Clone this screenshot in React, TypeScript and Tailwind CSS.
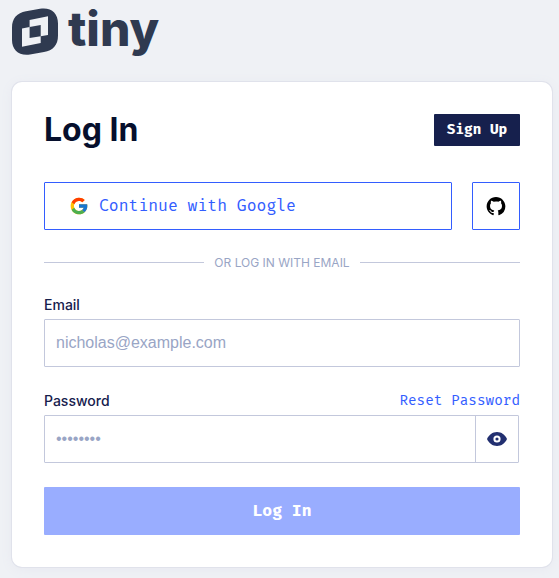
import React from "react";

const mono = "font-['Fira_Code','Fira_Mono','DejaVu_Sans_Mono',monospace]";

function Logo() {
  return (
    <a href="#" aria-label="tiny" className="flex h-12 w-fit items-start gap-2 text-[#2f3a50]">
      <svg width="48" height="48" viewBox="0 0 48 48" aria-hidden="true">
        <path
          d="M14 3.200 L28 .8 C39 -1 46 5 46 15.500 L46 27.500 C46 37 41 42.500 32 44 L18 46.500 C7 48.200 0 42 0 32 L0 19.500 C0 10.500 5 4.800 14 3.200Z"
          fill="currentColor"
        />
        <path fill="#eff1f5" d="M17.600 12 L36 8.200 V26.900 L28.700 28.200 V16.900 L17.600 19Z" />
        <path fill="#eff1f5" d="M10 20.400 L17.600 19 V30 L28.700 28.200 V34.900 L10 38.800Z" />
      </svg>
      <span className="font-['Inter',sans-serif] text-5xl leading-[42px] font-extrabold">tiny</span>
    </a>
  );
}

function GoogleIcon() {
  return (
    <svg width="20" height="20" viewBox="0 0 48 48" aria-hidden="true">
      <path fill="#FFC107" d="M43.6 20H24v8h11.3C33.7 32.7 29.2 36 24 36c-6.600 0-12-5.400-12-12s5.400-12 12-12c3.100 0 5.800 1.200 8 3l5.700-5.700C34 6.100 29.300 4 24 4 13 4 4 13 4 24s9 20 20 20 20-9 20-20c0-1.300-.1-2.700-.4-4z" />
      <path fill="#FF3D00" d="m6.300 14.700 6.600 4.800C14.700 15.100 19 12 24 12c3.100 0 5.800 1.200 8 3l5.700-5.700C34 6.100 29.300 4 24 4 16.300 4 9.700 8.300 6.300 14.700z" />
      <path fill="#4CAF50" d="M24 44c5.200 0 9.900-2 13.400-5.200l-6.200-5.200C29.200 35.100 26.700 36 24 36c-5.200 0-9.600-3.300-11.300-8l-6.500 5C9.500 39.600 16.200 44 24 44z" />
      <path fill="#1976D2" d="M43.600 20H24v8h11.300c-.8 2.200-2.200 4.200-4.100 5.600l6.200 5.200C37 39.200 44 34 44 24c0-1.300-.1-2.700-.4-4z" />
    </svg>
  );
}

function GitHubIcon() {
  return (
    <svg width="20" height="20" viewBox="0 0 16 16" fill="#000" aria-hidden="true">
      <path d="M8 .7C3.860.7.500 4.060.500 8.200c0 3.310 2.150 6.120 5.130 7.120.38.070.51-.16.51-.36v-1.400c-2.090.46-2.530-.88-2.530-.88-.34-.87-.83-1.100-.83-1.100-.68-.47.050-.46.050-.46.750.050 1.150.780 1.150.780.670 1.150 1.760.820 2.190.620.060-.48.260-.82.480-1-1.670-.19-3.420-.83-3.420-3.710 0-.82.290-1.490.770-2.010-.080-.19-.33-.95.070-1.990 0 0 .63-.2 2.060.77A7.200 7.200 0 0 1 8 4.330c.640 0 1.280.090 1.880.25 1.430-.97 2.060-.77 2.060-.77.410 1.040.150 1.800.080 1.990.480.520.770 1.190.770 2.010 0 2.890-1.760 3.520-3.430 3.700.270.230.510.690.510 1.390v2.060c0 .2.130.430.510.360a7.500 7.500 0 0 0 5.120-7.120C15.500 4.060 12.140.7 8 .7Z" />
    </svg>
  );
}

function EyeIcon() {
  return (
    <svg width="20" height="14" viewBox="0 0 20 14" aria-hidden="true">
      <path fill="#222f70" d="M10 0C5.600 0 1.800 2.800 0 7c1.800 4.200 5.600 7 10 7s8.200-2.800 10-7C18.200 2.800 14.400 0 10 0Z" />
      <circle cx="10" cy="7" r="2.600" fill="#222f70" stroke="#fff" strokeWidth="2" />
    </svg>
  );
}

export default function App() {
  return (
    <main className="min-h-screen bg-[#eff1f5] pt-2 pr-[7px] pb-[10px] pl-3 font-['Inter',sans-serif] text-[#16204d]">
      <Logo />
      <section className="mt-[26px] rounded-[10px] bg-white px-8 pt-8 pb-8 shadow-[0_0_0_1px_#e0e2eb,0_2px_12px_#e6e8f0]">
        <header className="flex h-8 items-center justify-between">
          <h1 className="text-[32px] leading-8 font-bold text-[#060f2d]">Log In</h1>
          <button type="button" className={`${mono} h-8 w-[86px] rounded-[1px] bg-[#16204d] text-sm font-bold text-white`}>
            Sign Up
          </button>
        </header>

        <div className="mt-9 flex gap-5">
          <button type="button" className={`${mono} flex h-12 flex-1 items-center gap-[10px] rounded-[1px] border border-[#335dff] pl-6 text-base text-[#335dff]`}>
            <GoogleIcon />
            Continue with Google
          </button>
          <button type="button" aria-label="Continue with GitHub" className="flex size-12 items-center justify-center rounded-[1px] border border-[#335dff]">
            <GitHubIcon />
          </button>
        </div>

        <div className="mt-6 flex items-center gap-[10px] text-xs leading-[17px] text-[#99a5c5]">
          <span className="h-px flex-1 bg-[#c3c8dc]" />
          OR LOG IN WITH EMAIL
          <span className="h-px flex-1 bg-[#c3c8dc]" />
        </div>

        <form onSubmit={(e) => e.preventDefault()}>
          <label htmlFor="email" className="mt-6 block text-sm leading-5 font-medium">
            Email
          </label>
          <input
            id="email"
            type="email"
            placeholder="nicholas@example.com"
            className="mt-1 block h-12 w-full rounded-[1px] border border-[#c3c8dc] px-[11px] font-['Liberation_Sans',Arial,sans-serif] text-base outline-none placeholder:text-[#99a5c5]"
          />

          <div className="mt-6 flex items-center justify-between text-sm leading-5">
            <label htmlFor="password" className="font-medium">
              Password
            </label>
            <a href="#" className={`${mono} text-[#335dff]`}>
              Reset Password
            </a>
          </div>
          <div className="mt-1 mr-px flex h-12 rounded-[1px] border border-[#c3c8dc]">
            <input
              id="password"
              type="password"
              placeholder="••••••••"
              className="min-w-0 flex-1 px-[11px] font-['Liberation_Sans',Arial,sans-serif] text-base outline-none placeholder:text-[#99a5c5]"
            />
            <button type="button" aria-label="Show password" className="flex w-[43px] items-center justify-center border-l border-[#c3c8dc]">
              <EyeIcon />
            </button>
          </div>

          <button type="submit" className={`${mono} mt-6 h-12 w-full rounded-[1px] bg-[#99adff] text-base font-bold text-white`}>
            Log In
          </button>
        </form>
      </section>
    </main>
  );
}
